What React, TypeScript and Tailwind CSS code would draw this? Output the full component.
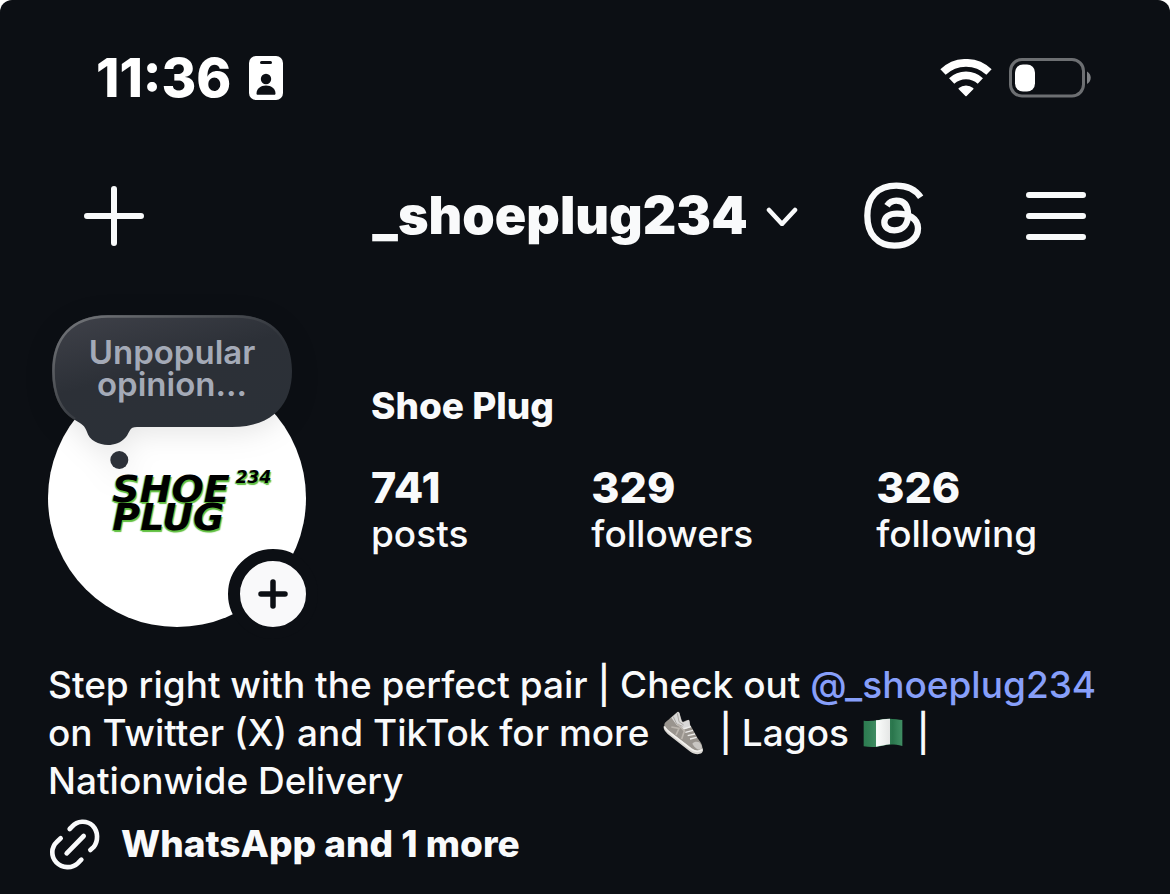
import React from "react";

function IdBadgeIcon() {
  return (
    <svg width="34" height="44" viewBox="0 0 34 44" aria-hidden="true">
      <rect width="34" height="44" rx="7" fill="#fff" />
      <rect x="11" y="5" width="12" height="3" rx="1.5" fill="#0c0f14" />
      <circle cx="17" cy="23" r="5.2" fill="#0c0f14" />
      <path d="M7.5 37.5c0-5 4.2-8 9.5-8s9.500 3 9.500 8c0 .9-.5 1.300-1.300 1.300H8.800c-.8 0-1.300-.4-1.300-1.300z" fill="#0c0f14" />
    </svg>
  );
}

function WifiIcon() {
  return (
    <svg width="52" height="38" viewBox="118 176 156 114" fill="none" aria-hidden="true">
      <path d="M127 215A100 100 0 0 1 265 215" stroke="#fff" strokeWidth="23" />
      <path d="M153 242A63 63 0 0 1 239 242" stroke="#fff" strokeWidth="23" />
      <path d="M176 265A32 32 0 0 1 216 265L196 285z" fill="#fff" stroke="#fff" strokeWidth="5" strokeLinejoin="round" />
    </svg>
  );
}

function BatteryIcon() {
  return (
    <svg width="83" height="40" viewBox="0 0 83 40" aria-hidden="true">
      <rect x="1.500" y="1.500" width="73" height="36.500" rx="11.500" fill="none" stroke="#6d6f72" strokeWidth="3" />
      <rect x="6" y="6.500" width="20" height="27" rx="8" fill="#fff" />
      <path d="M78 13.500c5 2.500 5 10 0 12.500z" fill="#808285" />
    </svg>
  );
}

function StatusBar() {
  return (
    <div className="flex items-center justify-between pt-[55px] pr-[78px] pl-[96px]">
      <div className="flex items-center gap-[18px]">
        <time className="text-[53px] leading-[46px] font-extrabold text-white">11:36</time>
        <IdBadgeIcon />
      </div>
      <div className="flex items-center gap-[17px]">
        <WifiIcon />
        <BatteryIcon />
      </div>
    </div>
  );
}

function ThreadsIcon() {
  return (
    <svg width="60" height="67" viewBox="71 67 180 201" fill="none" stroke="currentColor" strokeWidth="19" aria-hidden="true">
      <path d="M241 113C225 89 200 78 168 78C112 78 81 112 81 168C81 224 112 258 162 258C205 258 233 236 233 206C233 176 205 162 170 162C146 162 132 172 132 188C132 203 145 212 162 212C190 212 203 192 203 165C203 138 192 123 168 123C155 123 146 129 140 138" />
    </svg>
  );
}

function NavBar() {
  return (
    <header className="grid grid-cols-[1fr_auto_1fr] items-center px-[84px] pt-[81px]">
      <button type="button" aria-label="Create" className="justify-self-start">
        <svg width="60" height="60" viewBox="0 0 60 60" stroke="currentColor" strokeWidth="6" strokeLinecap="round" aria-hidden="true">
          <path d="M30 3v54M3 30h54" />
        </svg>
      </button>
      <button type="button" className="flex items-center gap-[18px]">
        <h1 className="text-[52px] leading-[60px] font-black">_shoeplug234</h1>
        <svg width="32" height="20" viewBox="0 0 32 20" fill="none" stroke="currentColor" strokeWidth="4.500" strokeLinecap="round" strokeLinejoin="round" aria-hidden="true">
          <path d="M3 4l13 14L29 4" />
        </svg>
      </button>
      <div className="flex items-center gap-[102px] justify-self-end">
        <button type="button" aria-label="Threads">
          <ThreadsIcon />
        </button>
        <button type="button" aria-label="Menu">
          <svg width="60" height="48" viewBox="0 0 60 48" stroke="currentColor" strokeWidth="6" strokeLinecap="round" aria-hidden="true">
            <path d="M3 3h54M3 24h54M3 45h54" />
          </svg>
        </button>
      </div>
    </header>
  );
}

function NoteBubble() {
  return (
    <button type="button" className="absolute top-0 left-1 flex h-[112px] w-[240px] justify-center pt-[21px] text-[33px] leading-8 font-semibold text-[#a4aab7]">
      <svg className="absolute top-0 left-0 drop-shadow-[0_6px_14px_rgba(0,0,0,0.1)]" width="240" height="156" viewBox="0 0 240 156" aria-hidden="true">
        <defs>
          <linearGradient id="noteFill" x1="0" y1="0" x2="0.5" y2="1">
            <stop offset="0" stopColor="#40424a" />
            <stop offset="0.5" stopColor="#2c3037" />
            <stop offset="1" stopColor="#2b3037" />
          </linearGradient>
          <linearGradient id="noteRim" x1="0" y1="0" x2="0.8" y2="0.7">
            <stop offset="0" stopColor="#77797d" />
            <stop offset="0.5" stopColor="#4a4d52" />
            <stop offset="1" stopColor="#2b3037" stopOpacity="0" />
          </linearGradient>
        </defs>
        <path d="M56 0H184C222 0 240 24 240 56S222 112 180 112H85C77 112 78 117 74 122C69 128 62 130 56 130C47 130 37 125 35 117C33 111 30 109 23 105C8 97 0 79 0 56C0 24 18 0 56 0z" fill="url(#noteFill)" />
        <path d="M23 104C8 95 1.500 79 1.500 56C1.500 24 19 1.500 56 1.500H184C221 1.500 238.500 24 238.500 56" fill="none" stroke="url(#noteRim)" strokeWidth="2.500" />
        <circle cx="67.300" cy="145" r="9" fill="#2d3139" />
      </svg>
      <span className="relative">
        Unpopular
        <br />
        opinion...
      </span>
    </button>
  );
}

function Avatar() {
  return (
    <div className="relative shrink-0 pt-[54px]">
      <div className="flex size-[258px] flex-col items-center rounded-full bg-white pt-[106px] pr-3">
        <div className="relative text-[38px] leading-[28px] font-bold text-black italic [font-family:'DejaVu_Sans',sans-serif] [text-shadow:1px_2px_1px_#5fbf3f,-1px_1px_1px_#5fbf3f]">
          <p>SHOE</p>
          <p>PLUG</p>
          <span className="absolute -top-2 left-full pl-[6px] text-[17px] leading-5">234</span>
        </div>
      </div>
      <NoteBubble />
      <button type="button" aria-label="Add story" className="absolute -right-3 -bottom-3 flex size-[90px] items-center justify-center rounded-full border-[12px] border-[#0c0f14] bg-[#f9f9fa] text-[#0c0f14]">
        <svg width="30" height="30" viewBox="0 0 30 30" stroke="currentColor" strokeWidth="5.500" strokeLinecap="round" aria-hidden="true">
          <path d="M15 3v24M3 15h24" />
        </svg>
      </button>
    </div>
  );
}

const stats = [
  { value: "741", label: "posts" },
  { value: "329", label: "followers" },
  { value: "326", label: "following" },
];

function Sneaker() {
  return (
    <svg className="mx-1 inline-block align-[-9px]" width="42" height="44" viewBox="0 0 126 132" role="img" aria-label="sneaker">
      <path d="M3 44C-1 52 6 61 14 69L82 122C92 130 108 132 116 126C121 122 121 115 118 110L50 60z" fill="#d8d5d1" />
      <path d="M4 42C4 33 14 30 21 22L43 3C48 0 50 5 51 11L57 31C61 35 68 27 77 26C82 28 79 39 84 46L104 82C110 91 119 99 118 112C112 121 98 121 88 113L18 60C9 54 4 49 4 42z" fill="#99948e" />
      <path d="M25 20L44 3C49 1 50 8 52 18L56 31C62 38 68 28 77 27C81 31 78 39 84 48L63 55L41 42z" fill="#d9d8d7" />
      <path d="M31 17l10 22 18 7M43 7l5 25 14 10" fill="none" stroke="#aaa7a3" strokeWidth="3" />
      <path d="M60 54l24-7M67 64l23-6M74 74l22-5M81 84l20-5" stroke="#eeedeb" strokeWidth="4" />
      <path d="M25 48l23 4-9 20M44 39l20 21-8 24" fill="none" stroke="#bcb6af" strokeWidth="5" />
      <path d="M88 98C93 91 103 91 109 94C117 103 119 111 114 116C103 117 96 111 88 98z" fill="#c9c6c2" />
      <path d="M5 47C7 55 17 61 26 69L84 114C95 122 109 123 117 116" fill="none" stroke="#f2f0ed" strokeWidth="5" />
    </svg>
  );
}

function NigeriaFlag() {
  return (
    <svg className="mx-1 inline-block align-[-2px]" width="40" height="30" viewBox="0 0 120 90" role="img" aria-label="Nigeria">
      <defs>
        <linearGradient id="flagShade" x1="0" x2="1" y1="0" y2="0">
          <stop offset="0" stopColor="#000" stopOpacity="0.05" />
          <stop offset="0.350" stopColor="#fff" stopOpacity="0.100" />
          <stop offset="0.750" stopColor="#000" stopOpacity="0.100" />
          <stop offset="1" stopColor="#fff" stopOpacity="0.080" />
        </linearGradient>
      </defs>
      <path d="M2 8C30 12 50 2 78 2C95 2 106 5 118 6V84C92 78 78 79 60 83C38 88 20 87 2 85z" fill="#2f8355" />
      <path d="M39 7C53 5 66 2 81 2V79C65 80 54 85 39 86z" fill="#f9fbfa" />
      <path d="M2 8C30 12 50 2 78 2C95 2 106 5 118 6V84C92 78 78 79 60 83C38 88 20 87 2 85z" fill="url(#flagShade)" />
    </svg>
  );
}

function LinkIcon() {
  return (
    <svg width="52" height="52" viewBox="0 0 156 156" fill="none" stroke="currentColor" strokeWidth="14" strokeLinecap="round" aria-hidden="true">
      <path d="M65 33L72 26C88 8 116 6 134 23C151 41 151 69 137 87L127 96" />
      <path d="M38 61L27 71C9 88 8 115 25 133C43 151 72 152 89 136L100 125" />
      <path d="M56 106L107 54" />
    </svg>
  );
}

export default function App() {
  return (
    <div className="bg-white">
      <main className="min-h-screen rounded-t-[12px] bg-[#0c0f14] pb-[22px] text-[#f9fafb] [font-family:Inter,sans-serif]">
        <StatusBar />
        <NavBar />
        <section className="flex gap-[65px] px-12 pt-[66px]">
          <Avatar />
          <div className="pt-[68px]">
            <h2 className="text-[37px] leading-[46px] font-extrabold">Shoe Plug</h2>
            <ul className="flex gap-[123px] pt-[34px]">
              {stats.map((stat) => (
                <li key={stat.label}>
                  <a href="#" className="block">
                    <strong className="block text-[43px] leading-[48px] font-extrabold">{stat.value}</strong>
                    <span className="block text-[37px] leading-[46px] font-medium">{stat.label}</span>
                  </a>
                </li>
              ))}
            </ul>
          </div>
        </section>
        <section className="px-12 pt-[34px]">
          <p className="text-[37px] leading-[48px] font-medium">
            Step right with the perfect pair | Check out{" "}
            <a href="#" className="text-[#879ffa]">@_shoeplug234</a>
            <br />
            on Twitter (X) and TikTok for more <Sneaker /> | Lagos <NigeriaFlag /> |
            <br />
            Nationwide Delivery
          </p>
          <a href="#" className="mt-[13px] flex items-center gap-[21px] text-[37px] leading-[48px] font-extrabold">
            <LinkIcon />
            WhatsApp and 1 more
          </a>
        </section>
      </main>
    </div>
  );
}
